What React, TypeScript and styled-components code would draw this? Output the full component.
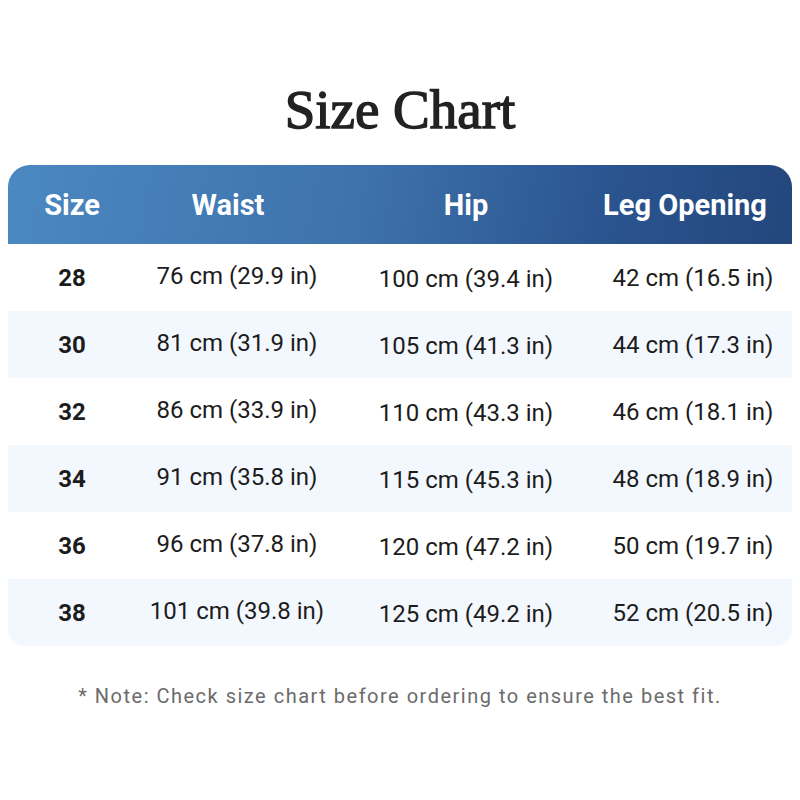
import { createGlobalStyle, styled } from 'styled-components';

type Row = {
  size: string;
  waist: string;
  hip: string;
  leg: string;
};

const rows: Row[] = [
  { size: '28', waist: '76 cm (29.9 in)', hip: '100 cm (39.4 in)', leg: '42 cm (16.5 in)' },
  { size: '30', waist: '81 cm (31.9 in)', hip: '105 cm (41.3 in)', leg: '44 cm (17.3 in)' },
  { size: '32', waist: '86 cm (33.9 in)', hip: '110 cm (43.3 in)', leg: '46 cm (18.1 in)' },
  { size: '34', waist: '91 cm (35.8 in)', hip: '115 cm (45.3 in)', leg: '48 cm (18.9 in)' },
  { size: '36', waist: '96 cm (37.8 in)', hip: '120 cm (47.2 in)', leg: '50 cm (19.7 in)' },
  { size: '38', waist: '101 cm (39.8 in)', hip: '125 cm (49.2 in)', leg: '52 cm (20.5 in)' },
];

const GlobalStyle = createGlobalStyle`
  html, body {
    margin: 0;
    padding: 0;
    background: #ffffff;
  }
`;

const Page = styled.div`
  width: 800px;
  height: 800px;
  box-sizing: border-box;
  padding: 78px 8px 0;
  font-family: Roboto, 'Liberation Sans', sans-serif;
  display: flex;
  flex-direction: column;
  align-items: stretch;
`;

const Title = styled.h1`
  margin: 0;
  height: 87px;
  font-family: 'Liberation Serif', serif;
  font-weight: 400;
  font-size: 55px;
  line-height: 64px;
  color: #222222;
  text-align: center;
  -webkit-text-stroke: 1.4px #222222;
`;

const Table = styled.div`
  border-radius: 22px 22px 16px 16px;
  overflow: hidden;
`;

const grid = `
  display: grid;
  grid-template-columns: 128px 202px 256px 198px;
  align-items: center;
`;

const HeaderRow = styled.div`
  ${grid}
  height: 79px;
  background: linear-gradient(100deg, #4b88c2 0%, #3e72ab 45%, #2b5590 75%, #23467c 100%);
`;

const HeadCell = styled.div<{ $shift?: number }>`
  color: #ffffff;
  font-weight: 700;
  font-size: 29px;
  text-align: center;
  transform: translateX(${(p) => p.$shift ?? 0}px);
`;

const BodyRow = styled.div<{ $striped: boolean }>`
  ${grid}
  height: 67px;
  background: ${(p) => (p.$striped ? '#f3f8fe' : '#ffffff')};
`;

const Cell = styled.div<{ $bold?: boolean; $dy?: number }>`
  color: #1c1c1c;
  font-size: 24px;
  font-weight: ${(p) => (p.$bold ? 700 : 400)};
  text-align: center;
  transform: translateY(${(p) => p.$dy ?? 0}px);
`;

const Note = styled.p`
  margin: 38px 0 0;
  text-align: center;
  color: #6b6b6b;
  font-size: 20px;
  letter-spacing: 1.5px;
`;

export default function App() {
  return (
    <Page>
      <GlobalStyle />
      <Title>Size Chart</Title>
      <Table>
        <HeaderRow>
          <HeadCell>Size</HeadCell>
          <HeadCell $shift={-9}>Waist</HeadCell>
          <HeadCell>Hip</HeadCell>
          <HeadCell $shift={-8}>Leg Opening</HeadCell>
        </HeaderRow>
        {rows.map((r, i) => (
          <BodyRow key={r.size} $striped={i % 2 === 1}>
            <Cell $bold>{r.size}</Cell>
            <Cell $dy={-2}>{r.waist}</Cell>
            <Cell $dy={1}>{r.hip}</Cell>
            <Cell>{r.leg}</Cell>
          </BodyRow>
        ))}
      </Table>
      <Note>* Note: Check size chart before ordering to ensure the best fit.</Note>
    </Page>
  );
}
